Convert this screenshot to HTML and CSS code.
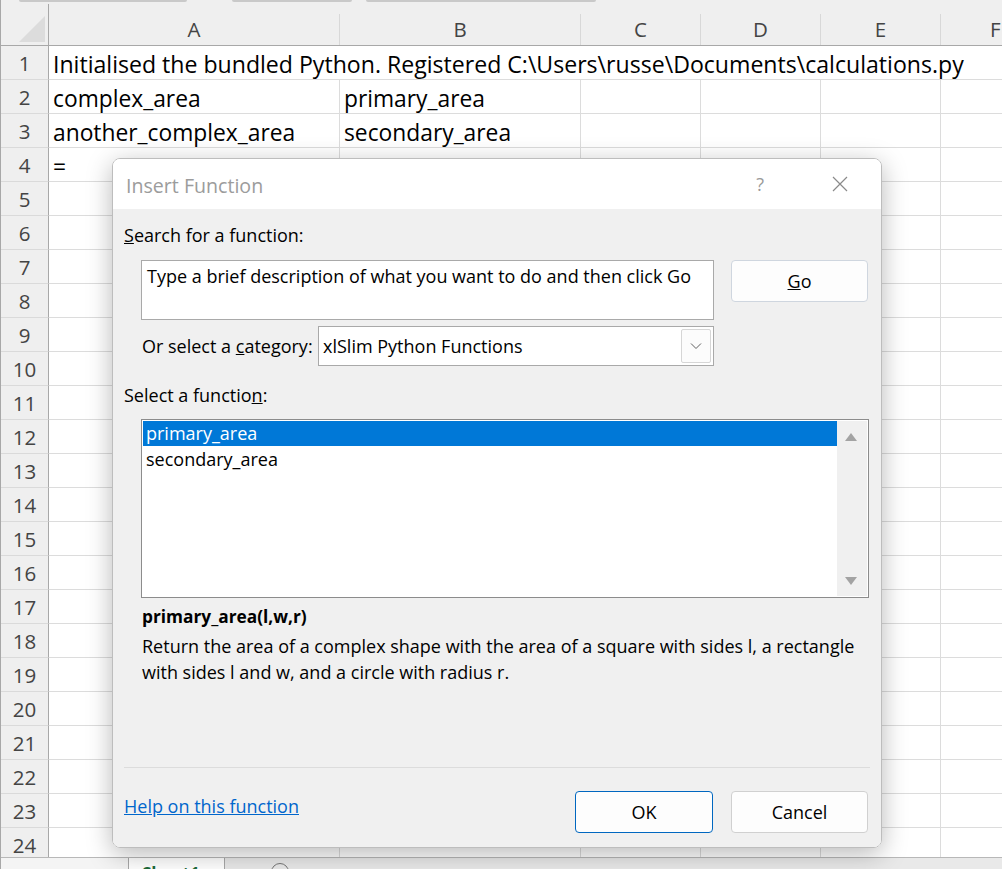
FILE: index.html
```html
<!DOCTYPE html>
<html>
<head>
<meta charset="utf-8">
<link rel="stylesheet" href="styles.css">
</head>
<body>
<div class="app">
  <div class="topbar">
    <span class="seg seg1"></span><span class="seg seg2"></span><span class="seg seg3"></span>
  </div>
  <div class="sheet">
    <div class="corner"><span class="tri"></span></div>
    <div class="colhead"><span>A</span></div>
    <div class="colhead"><span>B</span></div>
    <div class="colhead"><span>C</span></div>
    <div class="colhead"><span>D</span></div>
    <div class="colhead"><span>E</span></div>
    <div class="colhead last"><span>F</span></div>

    <div class="rowhead">1</div>
    <div class="cell span-all">Initialised the bundled Python. Registered C:\Users\russe\Documents\calculations.py</div>

    <div class="rowhead">2</div>
    <div class="cell">complex_area</div><div class="cell">primary_area</div><div class="cell"></div><div class="cell"></div><div class="cell"></div><div class="cell last"></div>
    <div class="rowhead">3</div>
    <div class="cell">another_complex_area</div><div class="cell">secondary_area</div><div class="cell"></div><div class="cell"></div><div class="cell"></div><div class="cell last"></div>
    <div class="rowhead">4</div>
    <div class="cell">=</div><div class="cell"></div><div class="cell"></div><div class="cell"></div><div class="cell"></div><div class="cell last"></div>
    <div class="rowhead">5</div><div class="cell"></div><div class="cell"></div><div class="cell"></div><div class="cell"></div><div class="cell"></div><div class="cell last"></div>
    <div class="rowhead">6</div><div class="cell"></div><div class="cell"></div><div class="cell"></div><div class="cell"></div><div class="cell"></div><div class="cell last"></div>
    <div class="rowhead">7</div><div class="cell"></div><div class="cell"></div><div class="cell"></div><div class="cell"></div><div class="cell"></div><div class="cell last"></div>
    <div class="rowhead">8</div><div class="cell"></div><div class="cell"></div><div class="cell"></div><div class="cell"></div><div class="cell"></div><div class="cell last"></div>
    <div class="rowhead">9</div><div class="cell"></div><div class="cell"></div><div class="cell"></div><div class="cell"></div><div class="cell"></div><div class="cell last"></div>
    <div class="rowhead">10</div><div class="cell"></div><div class="cell"></div><div class="cell"></div><div class="cell"></div><div class="cell"></div><div class="cell last"></div>
    <div class="rowhead">11</div><div class="cell"></div><div class="cell"></div><div class="cell"></div><div class="cell"></div><div class="cell"></div><div class="cell last"></div>
    <div class="rowhead">12</div><div class="cell"></div><div class="cell"></div><div class="cell"></div><div class="cell"></div><div class="cell"></div><div class="cell last"></div>
    <div class="rowhead">13</div><div class="cell"></div><div class="cell"></div><div class="cell"></div><div class="cell"></div><div class="cell"></div><div class="cell last"></div>
    <div class="rowhead">14</div><div class="cell"></div><div class="cell"></div><div class="cell"></div><div class="cell"></div><div class="cell"></div><div class="cell last"></div>
    <div class="rowhead">15</div><div class="cell"></div><div class="cell"></div><div class="cell"></div><div class="cell"></div><div class="cell"></div><div class="cell last"></div>
    <div class="rowhead">16</div><div class="cell"></div><div class="cell"></div><div class="cell"></div><div class="cell"></div><div class="cell"></div><div class="cell last"></div>
    <div class="rowhead">17</div><div class="cell"></div><div class="cell"></div><div class="cell"></div><div class="cell"></div><div class="cell"></div><div class="cell last"></div>
    <div class="rowhead">18</div><div class="cell"></div><div class="cell"></div><div class="cell"></div><div class="cell"></div><div class="cell"></div><div class="cell last"></div>
    <div class="rowhead">19</div><div class="cell"></div><div class="cell"></div><div class="cell"></div><div class="cell"></div><div class="cell"></div><div class="cell last"></div>
    <div class="rowhead">20</div><div class="cell"></div><div class="cell"></div><div class="cell"></div><div class="cell"></div><div class="cell"></div><div class="cell last"></div>
    <div class="rowhead">21</div><div class="cell"></div><div class="cell"></div><div class="cell"></div><div class="cell"></div><div class="cell"></div><div class="cell last"></div>
    <div class="rowhead">22</div><div class="cell"></div><div class="cell"></div><div class="cell"></div><div class="cell"></div><div class="cell"></div><div class="cell last"></div>
    <div class="rowhead">23</div><div class="cell"></div><div class="cell"></div><div class="cell"></div><div class="cell"></div><div class="cell"></div><div class="cell last"></div>
    <div class="rowhead">24</div><div class="cell"></div><div class="cell"></div><div class="cell"></div><div class="cell"></div><div class="cell"></div><div class="cell last"></div>
  </div>
  <div class="tabbar">
    <div class="tab-left"></div>
    <div class="tab-active">Sheet1</div>
    <div class="tab-add"><span class="plus"></span></div>
  </div>

  <div class="dialog">
    <div class="titlebar">
      <span class="title">Insert Function</span>
      <span class="help">?</span>
      <svg class="close" width="16" height="16" viewBox="0 0 16 16"><path d="M1 1 L15 15 M15 1 L1 15" stroke="#8a8a8a" stroke-width="1.2" fill="none"/></svg>
    </div>
    <div class="dbody">
      <div class="label first"><u>S</u>earch for a function:</div>
      <div class="search-row">
        <div class="textbox">Type a brief description of what you want to do and then click Go</div>
        <div class="btn go"><span><u>G</u>o</span></div>
      </div>
      <div class="cat-row">
        <span class="cat-label">Or select a <u>c</u>ategory:</span>
        <div class="select">
          <span class="sel-text">xlSlim Python Functions</span>
          <span class="sel-btn"><svg width="12" height="8" viewBox="0 0 12 8"><path d="M1 1.5 L6 6.5 L11 1.5" stroke="#606060" stroke-width="1" fill="none"/></svg></span>
        </div>
      </div>
      <div class="label fn-label">Select a functio<u>n</u>:</div>
      <div class="listbox">
        <div class="items">
          <div class="item selected">primary_area</div>
          <div class="item">secondary_area</div>
        </div>
        <div class="scrollbar">
          <span class="arrow up"></span>
          <span class="arrow down"></span>
        </div>
      </div>
      <div class="signature">primary_area(l,w,r)</div>
      <div class="desc">Return the area of a complex shape with the area of a square with sides l, a rectangle<br>with sides l and w, and a circle with radius r.</div>
      <div class="footer">
        <span class="link">Help on this function</span>
        <div class="buttons">
          <div class="btn ok">OK</div>
          <div class="btn cancel">Cancel</div>
        </div>
      </div>
    </div>
  </div>
</div>
</body>
</html>
```
FILE: styles.css
```css
* { box-sizing: border-box; }
html, body { margin: 0; padding: 0; }
body {
  font-family: "Open Sans", "Noto Sans", "DejaVu Sans", sans-serif;
  background: #ffffff;
}
.app {
  width: 1002px;
  height: 869px;
  position: relative;
  overflow: hidden;
  background: #fff;
  border-left: 1px solid #a8a8a8;
}
.topbar {
  height: 4px;
  background: #efefef;
  display: flex;
  position: relative;
}
.seg {
  height: 2px;
  background: #c9c9c9;
  border-radius: 0 0 3px 3px;
}
.seg1 { width: 168px; margin-left: 18px; }
.seg2 { width: 120px; margin-left: 45px; }
.seg3 { width: 230px; margin-left: 14px; }

.sheet {
  display: grid;
  grid-template-columns: 48px 291px 241px 120px 120px 120px 61px;
  grid-template-rows: 42px repeat(24, 34px);
}
.corner {
  background: #efefef;
  border-right: 1px solid #a8a8a8;
  border-bottom: 1px solid #a8a8a8;
  position: relative;
}
.tri {
  position: absolute;
  right: 3px;
  bottom: 3px;
  width: 0; height: 0;
  border-left: 26px solid transparent;
  border-bottom: 26px solid #dcdcdc;
}
.colhead {
  background: #efefef;
  border-bottom: 1px solid #a8a8a8;
  display: flex;
  align-items: flex-end;
}
.colhead span {
  display: block;
  width: 100%;
  height: 31px;
  border-right: 1px solid #d8d8d8;
  text-align: center;
  font-size: 20.5px;
  line-height: 31px;
  color: #444;
}
.colhead.last span { border-right: none; text-align: left; padding-left: 49px; }
.rowhead {
  background: #efefef;
  border-right: 1px solid #a8a8a8;
  border-bottom: 1px solid #dadada;
  text-align: center;
  font-size: 20.5px;
  line-height: 34px;
  color: #444;
}
.cell {
  border-right: 1px solid #dcdcdc;
  border-bottom: 1px solid #dcdcdc;
  font-size: 22.8px;
  line-height: 37px;
  padding-left: 4px;
  white-space: nowrap;
  color: #000;
}
.cell.last { border-right: none; }
.cell.span-all { grid-column: span 6; border-right: none; font-size: 23.1px; }

.tabbar {
  position: absolute;
  left: 0;
  right: 0;
  top: 857px;
  height: 12px;
  display: flex;
  background: #e9e9e9;
  border-top: 1px solid #b8b8b8;
}
.tab-left {
  width: 128px;
  background: #f4f4f4;
  border-right: 1px solid #a8a8a8;
}
.tab-active {
  width: 96px;
  background: #ffffff;
  border-right: 1px solid #a8a8a8;
  color: #1d6b3a;
  font-weight: 700;
  font-size: 17px;
  line-height: 22px;
  padding: 5px 0 0 13px;
  overflow: hidden;
}
.tab-add { flex: 1; position: relative; }
.plus {
  position: absolute;
  left: 46px;
  top: 5px;
  width: 18px;
  height: 18px;
  border: 1.5px solid #777;
  border-radius: 50%;
}

/* dialog */
.dialog {
  position: absolute;
  left: 111px;
  top: 158px;
  width: 770px;
  height: 690px;
  border: 1px solid #bdbdbd;
  border-radius: 8px;
  overflow: hidden;
  box-shadow: 0 6px 26px rgba(0,0,0,0.28);
  display: flex;
  flex-direction: column;
  font-size: 18px;
  color: #000;
}
.titlebar {
  height: 50px;
  background: #fff;
  display: flex;
  align-items: center;
  padding-left: 13px;
  flex-shrink: 0;
}
.title {
  font-size: 19.6px;
  color: #9c9c9c;
  flex: 1;
  padding-top: 2px;
}
.help {
  font-size: 18px;
  color: #9a9a9a;
  margin-right: 68px;
}
.close { margin-right: 33px; }

.dbody {
  flex: 1;
  background: #f0f0f0;
  padding: 0 11px;
  display: flex;
  flex-direction: column;
}
.label { line-height: 20px; height: 20px; }
.label.first { margin-top: 16px; }
.search-row {
  display: flex;
  align-items: flex-start;
  margin-top: 15px;
  padding-left: 17px;
  gap: 17px;
}
.textbox {
  width: 573px;
  height: 60px;
  background: #fff;
  border: 1px solid #a9a9a9;
  padding: 3px 5px;
  line-height: 24px;
}
.btn {
  background: #fdfdfd;
  border: 1px solid #d0d0d0;
  border-radius: 4px;
  display: flex;
  align-items: center;
  justify-content: center;
  height: 42px;
}
.go { width: 137px; border-color: #cfd6df; }
.cat-row {
  margin-top: 6px;
  margin-left: 17px;
  width: 573px;
  height: 40px;
  display: flex;
  align-items: center;
  justify-content: space-between;
}
.cat-label { padding-left: 1px; }
.select {
  width: 396px;
  height: 40px;
  border: 1px solid #a9a9a9;
  background: #fff;
  display: flex;
  align-items: center;
  padding: 2px 2px 2px 4px;
}
.sel-text { flex: 1; }
.sel-btn {
  width: 30px;
  height: 34px;
  border: 1px solid #d6d6d6;
  border-radius: 2px;
  background: #fcfcfc;
  display: flex;
  align-items: center;
  justify-content: center;
}
.fn-label { margin-top: 19px; }
.listbox {
  margin-top: 14px;
  margin-left: 17px;
  width: 728px;
  height: 179px;
  border: 1px solid #8c8c8c;
  background: #fff;
  padding: 1px;
  display: flex;
}
.items { flex: 1; }
.item {
  height: 26px;
  line-height: 25px;
  padding-left: 3px;
}
.item.selected {
  background: #0078d7;
  color: #fff;
  height: 25px;
  margin-bottom: 1px;
}
.scrollbar {
  width: 30px;
  background: #f0f0f0;
  position: relative;
}
.arrow {
  position: absolute;
  left: 8px;
  width: 0; height: 0;
  border-left: 6px solid transparent;
  border-right: 6px solid transparent;
}
.arrow.up { top: 12px; border-bottom: 8px solid #a3a3a3; }
.arrow.down { bottom: 11px; border-top: 8px solid #a3a3a3; }
.signature {
  margin-top: 8px;
  margin-left: 18px;
  font-weight: 700;
  font-size: 17.3px;
  line-height: 22px;
}
.desc {
  margin-top: 5px;
  margin-left: 18px;
  line-height: 26px;
}
.footer {
  margin-top: auto;
  border-top: 1px solid #dcdcdc;
  padding: 23px 2px 14px 0;
  display: flex;
  justify-content: space-between;
  align-items: flex-start;
}
.link {
  color: #0066cc;
  text-decoration: underline;
  line-height: 20px;
  margin-top: 5px;
}
.buttons { display: flex; gap: 18px; }
.ok { width: 138px; border-color: #0067c0; }
.cancel { width: 137px; }
```
